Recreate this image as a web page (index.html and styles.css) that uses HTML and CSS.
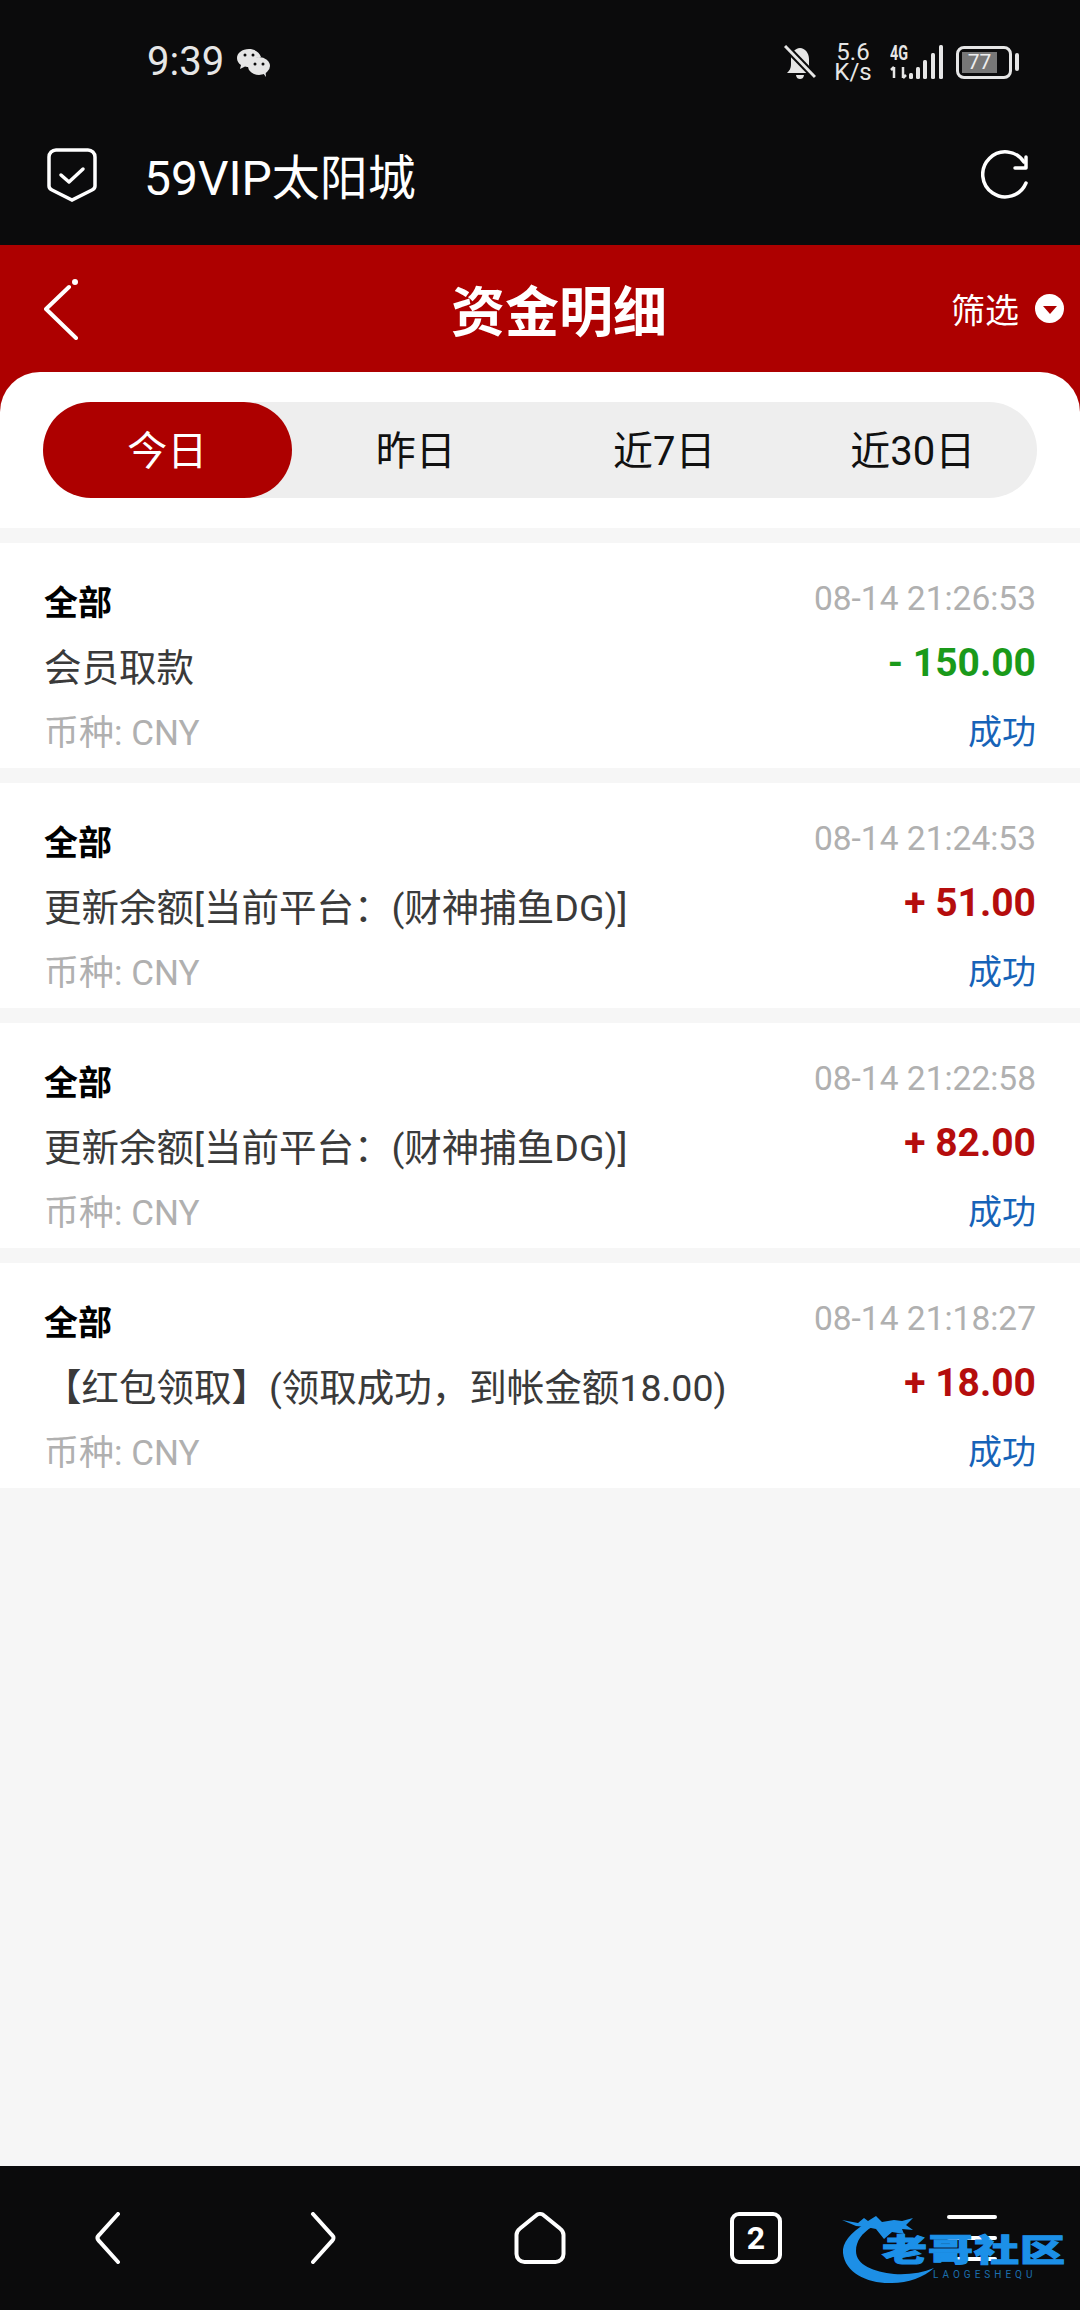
FILE: index.html
```html
<!DOCTYPE html>
<html>
<head>
  <title>资金明细</title>
  <link rel="stylesheet" href="styles.css">
</head>
<body>
  <div class="phone">
    <div class="status-bar">
      <div class="status-left">
        <span class="clock">9:39</span>
        <svg class="wechat" viewBox="0 0 34 29">
          <path d="M13 1C6 1 1 5 1 10c0 3 1.600 5.400 4 7l-1 4 5-2.500c1.500.4 3 .5 4.500.5C13 14 18 9 25 9c-1.500-4.800-6.400-8-12-8z" fill="#e6e6e6"/>
          <ellipse cx="23" cy="18" rx="11" ry="9" fill="#e6e6e6"/>
          <path d="M27 25l3 4-.5-6z" fill="#e6e6e6"/>
          <circle cx="9" cy="7" r="1.500" fill="#0b0b0c"/>
          <circle cx="17" cy="7" r="1.500" fill="#0b0b0c"/>
          <circle cx="19" cy="16" r="1.500" fill="#0b0b0c"/>
          <circle cx="27" cy="16" r="1.500" fill="#0b0b0c"/>
        </svg>
      </div>
      <div class="status-right">
        <svg class="bell" viewBox="0 0 32 34">
          <path d="M3 28c2-2 4-4 4-9v-5c0-6 4-11 9-11s9 5 9 11v5c0 5 2 7 4 9z" fill="#e6e6e6"/>
          <path d="M12 30h8c-.5 3-2 4-4 4s-3.500-1-4-4z" fill="#e6e6e6"/>
          <path d="M1 1l30 31" stroke="#0b0b0c" stroke-width="7"/>
          <path d="M1 1l30 31" stroke="#e6e6e6" stroke-width="3"/>
        </svg>
        <div class="speed"><span>5.6</span><span>K/s</span></div>
        <svg class="signal" viewBox="0 -8 54 42">
          <path d="M4 22v11M1 25l3-3M13 33V22M16 30l-3 3" stroke="#e6e6e6" stroke-width="2.500" fill="none"/>
          <rect x="19" y="28" width="4" height="6" rx="1.500" fill="#e6e6e6"/>
          <rect x="26" y="22" width="4" height="12" rx="1.500" fill="#e6e6e6"/>
          <rect x="33" y="15" width="4" height="19" rx="1.500" fill="#e6e6e6"/>
          <rect x="41" y="8" width="4" height="26" rx="1.500" fill="#e6e6e6"/>
          <rect x="49" y="0" width="4" height="34" rx="1.500" fill="#e6e6e6"/>
          <text x="0" y="15" class="signal-text" textLength="18" lengthAdjust="spacingAndGlyphs">4G</text>
        </svg>
        <div class="battery">
          <div class="battery-body"><span class="battery-fill">77</span></div>
          <div class="battery-nub"></div>
        </div>
      </div>
    </div>

    <div class="app-bar">
      <svg class="shield" viewBox="0 0 50 54">
        <path d="M9 2h32a7 7 0 0 1 7 7v29c0 2-1 3-3 4L25 52 5 42c-2-1-3-2-3-4V9a7 7 0 0 1 7-7z" fill="none" stroke="#fff" stroke-width="3.500"/>
        <path d="M14 27l8 7 14-13" fill="none" stroke="#fff" stroke-width="3.500" stroke-linecap="round" stroke-linejoin="round"/>
      </svg>
      <div class="app-title">59VIP太阳城</div>
      <svg class="refresh" viewBox="0 0 50 50">
        <path d="M45 33A22.500 22.500 0 1 1 43 12" fill="none" stroke="#fff" stroke-width="3.500" stroke-linecap="round"/>
        <path d="M45 7v11H34" fill="none" stroke="#fff" stroke-width="3.500" stroke-linecap="round" stroke-linejoin="round"/>
      </svg>
    </div>

    <div class="page-header">
      <svg class="back" viewBox="0 0 36 62">
        <path d="M25 9L2 31l30 29" fill="none" stroke="#fff" stroke-width="4" stroke-linecap="round" stroke-linejoin="round"/>
        <circle cx="31" cy="4" r="3" fill="#fff"/>
      </svg>
      <h1>资金明细</h1>
      <div class="filter">
        <span>筛选</span>
        <span class="filter-dot"><i></i></span>
      </div>
    </div>

    <div class="sheet-wrap">
      <div class="sheet">
        <div class="tabs">
          <div class="tab active">今日</div>
          <div class="tab">昨日</div>
          <div class="tab">近7日</div>
          <div class="tab">近30日</div>
        </div>
      </div>
    </div>

    <div class="list">
      <div class="record">
        <div class="row"><span class="type">全部</span><span class="time">08-14 21:26:53</span></div>
        <div class="row"><span class="desc">会员取款</span><span class="amount minus">- 150.00</span></div>
        <div class="row"><span class="currency">币种: CNY</span><span class="state">成功</span></div>
      </div>
      <div class="record">
        <div class="row"><span class="type">全部</span><span class="time">08-14 21:24:53</span></div>
        <div class="row"><span class="desc">更新余额[当前平台：(财神捕鱼DG)]</span><span class="amount plus">+ 51.00</span></div>
        <div class="row"><span class="currency">币种: CNY</span><span class="state">成功</span></div>
      </div>
      <div class="record">
        <div class="row"><span class="type">全部</span><span class="time">08-14 21:22:58</span></div>
        <div class="row"><span class="desc">更新余额[当前平台：(财神捕鱼DG)]</span><span class="amount plus">+ 82.00</span></div>
        <div class="row"><span class="currency">币种: CNY</span><span class="state">成功</span></div>
      </div>
      <div class="record">
        <div class="row"><span class="type">全部</span><span class="time">08-14 21:18:27</span></div>
        <div class="row"><span class="desc">【红包领取】(领取成功，到帐金额18.00)</span><span class="amount plus">+ 18.00</span></div>
        <div class="row"><span class="currency">币种: CNY</span><span class="state">成功</span></div>
      </div>
    </div>

    <div class="bottom-nav">
      <svg class="nav-icon" viewBox="0 0 52 52">
        <path d="M36 2L17 23c-2 2-2 4 0 6l19 21" fill="none" stroke="#fff" stroke-width="4" stroke-linecap="round"/>
      </svg>
      <svg class="nav-icon" viewBox="0 0 52 52">
        <path d="M15 2l19 21c2 2 2 4 0 6L15 50" fill="none" stroke="#fff" stroke-width="4" stroke-linecap="round"/>
      </svg>
      <svg class="nav-icon" viewBox="0 0 52 52">
        <path d="M22 3.500a6 6 0 0 1 8 0l16 13c2 1.500 3.500 3.500 3.500 6.500v19a8 8 0 0 1-8 8h-31a8 8 0 0 1-8-8V23c0-3 1.500-5 3.500-6.500z" fill="none" stroke="#fff" stroke-width="4"/>
      </svg>
      <div class="tab-count">2</div>
      <div class="menu-icon"><i></i><i></i><i></i></div>
      <div class="watermark">
        <svg class="dragon" viewBox="0 0 222 70">
          <path d="M24 8C8 18 0 28 1 38c2 20 25 31 49 30 16 0 32-6 42-15-12 5-26 7-40 6-20-2-38-9-38-23 0-10 6-18 16-24z" fill="#1d8fe6"/>
          <path d="M0 5l16 3 6-5 4 3 8-5 6 6 12-2 8 1 11-3-7 7 7 5-11-1 2 5-12-2-8 7-8-10-10-2-10-1z" fill="#1d8fe6"/>
        </svg>
        <span class="wm-name">老哥社区</span>
        <span class="wm-sub">LAOGESHEQU</span>
      </div>
    </div>
  </div>
</body>
</html>
```

FILE: styles.css
```css
* {
  box-sizing: border-box;
}

body {
  margin: 0;
  font-family: Roboto, "Noto Sans CJK SC", sans-serif;
  background-color: #f6f6f6;
}

.phone {
  width: 1080px;
  height: 2310px;
  display: flex;
  flex-direction: column;
  overflow: hidden;
}

/* status bar */
.status-bar {
  height: 104px;
  padding: 20px 61px 0 147px;
  background-color: #0b0b0c;
  color: #e6e6e6;
  display: flex;
  justify-content: space-between;
  align-items: center;
}

.status-left {
  display: flex;
  align-items: center;
  gap: 12px;
}

.clock {
  font-size: 40px;
  line-height: 44px;
}

.wechat {
  width: 34px;
  height: 29px;
}

.status-right {
  display: flex;
  align-items: center;
}

.bell {
  width: 32px;
  height: 34px;
  margin-right: 19px;
}

.speed {
  width: 36px;
  display: flex;
  flex-direction: column;
  align-items: center;
  font-size: 24px;
  line-height: 20px;
  margin-right: 19px;
}

.signal {
  width: 54px;
  height: 42px;
  margin-top: -8px;
  margin-right: 12px;
}

.signal-text {
  font-family: Roboto, sans-serif;
  font-size: 20px;
  font-weight: 700;
  fill: #e6e6e6;
}

.battery {
  display: flex;
  align-items: center;
  gap: 3px;
}

.battery-body {
  width: 56px;
  height: 33px;
  border: 3px solid #e6e6e6;
  border-radius: 8px;
  padding: 3px;
}

.battery-fill {
  display: block;
  width: 35px;
  height: 21px;
  background-color: #777;
  color: #eee;
  font-size: 21px;
  line-height: 21px;
  text-align: center;
}

.battery-nub {
  width: 4px;
  height: 18px;
  background-color: #e6e6e6;
  border-radius: 2px;
}

/* browser title bar */
.app-bar {
  height: 141px;
  padding: 0 49px 0 47px;
  background-color: #0b0b0c;
  color: #fff;
  display: flex;
  align-items: center;
}

.shield {
  width: 50px;
  height: 54px;
}

.app-title {
  margin-left: 47px;
  margin-bottom: 2px;
  flex: 1;
  font-size: 48px;
}

.refresh {
  width: 50px;
  height: 50px;
}

/* red page header */
.page-header {
  height: 127px;
  padding: 0 16px 0 44px;
  background-color: #ad0000;
  color: #fff;
  display: flex;
  justify-content: space-between;
  align-items: center;
  position: relative;
}

.back {
  width: 36px;
  height: 62px;
}

.page-header h1 {
  position: absolute;
  left: 0;
  right: 0;
  margin: 0;
  padding-left: 38px;
  text-align: center;
  font-size: 54px;
  font-weight: 700;
}

.filter {
  display: flex;
  align-items: center;
  gap: 16px;
  font-size: 34px;
}

.filter-dot {
  width: 29px;
  height: 29px;
  border-radius: 50%;
  background-color: #fff;
  display: flex;
  justify-content: center;
  align-items: center;
}

.filter-dot i {
  width: 0;
  height: 0;
  margin-top: 2px;
  border-style: solid;
  border-width: 8px 7px 0;
  border-color: #ad0000 transparent transparent;
}

/* white sheet with tabs */
.sheet-wrap {
  background-color: #ad0000;
}

.sheet {
  height: 156px;
  padding: 30px 43px;
  background-color: #fff;
  border-radius: 40px 40px 0 0;
}

.tabs {
  height: 96px;
  display: grid;
  grid-template-columns: repeat(4, 1fr);
  background-color: #eeeeee;
  border-radius: 48px;
}

.tab {
  display: flex;
  justify-content: center;
  align-items: center;
  padding-bottom: 4px;
  font-size: 40px;
  color: #111;
}

.tab.active {
  background-color: #ad0000;
  color: #fff;
  border-radius: 48px;
}

/* records */
.list {
  flex: 1;
  padding-top: 15px;
  display: flex;
  flex-direction: column;
  gap: 15px;
}

.record {
  height: 225px;
  padding: 25px 44px 0;
  background-color: #fff;
}

.row {
  height: 64.500px;
  display: flex;
  justify-content: space-between;
  align-items: center;
}

.type {
  font-size: 34px;
  font-weight: 700;
  color: #000;
}

.time {
  margin-top: -3px;
  font-size: 33.500px;
  color: #b0b0b0;
}

.desc {
  font-size: 37.500px;
  color: #3a3a3a;
}

.amount {
  margin-top: -4px;
  font-size: 39px;
  font-weight: 700;
}

.amount.minus {
  color: #1a9a1a;
}

.amount.plus {
  color: #b50d0d;
}

.currency {
  font-size: 35px;
  color: #b0b0b0;
}

.state {
  font-size: 34px;
  color: #1763b8;
}

/* bottom bar */
.bottom-nav {
  height: 144px;
  background-color: #0b0b0c;
  display: grid;
  grid-template-columns: repeat(5, 1fr);
  justify-items: center;
  align-items: center;
  position: relative;
}

.nav-icon {
  width: 52px;
  height: 52px;
}

.tab-count {
  width: 52px;
  height: 52px;
  border: 4px solid #fff;
  border-radius: 9px;
  color: #fff;
  font-size: 32px;
  font-weight: 700;
  line-height: 44px;
  text-align: center;
}

.menu-icon {
  width: 50px;
  height: 46px;
  display: flex;
  flex-direction: column;
  justify-content: space-between;
}

.menu-icon i {
  display: block;
  height: 4px;
  background-color: #fff;
  border-radius: 2px;
}

/* watermark sits on top of the bottom bar */
.watermark {
  position: absolute;
  left: 842px;
  top: 49px;
  width: 222px;
  height: 70px;
}

.dragon {
  position: absolute;
  left: 0;
  top: 0;
  width: 222px;
  height: 70px;
}

.wm-name {
  position: absolute;
  left: 40px;
  top: 21px;
  font-size: 45px;
  line-height: 30px;
  font-weight: 900;
  letter-spacing: 1px;
  white-space: nowrap;
  transform: scaleY(.68);
  color: #1c90e8;
  -webkit-text-stroke: 1.500px #1c90e8;
}

.wm-sub {
  position: absolute;
  left: 91px;
  top: 55px;
  font-size: 10px;
  line-height: 10px;
  letter-spacing: 4px;
  color: #1b6fae;
  white-space: nowrap;
}
```
